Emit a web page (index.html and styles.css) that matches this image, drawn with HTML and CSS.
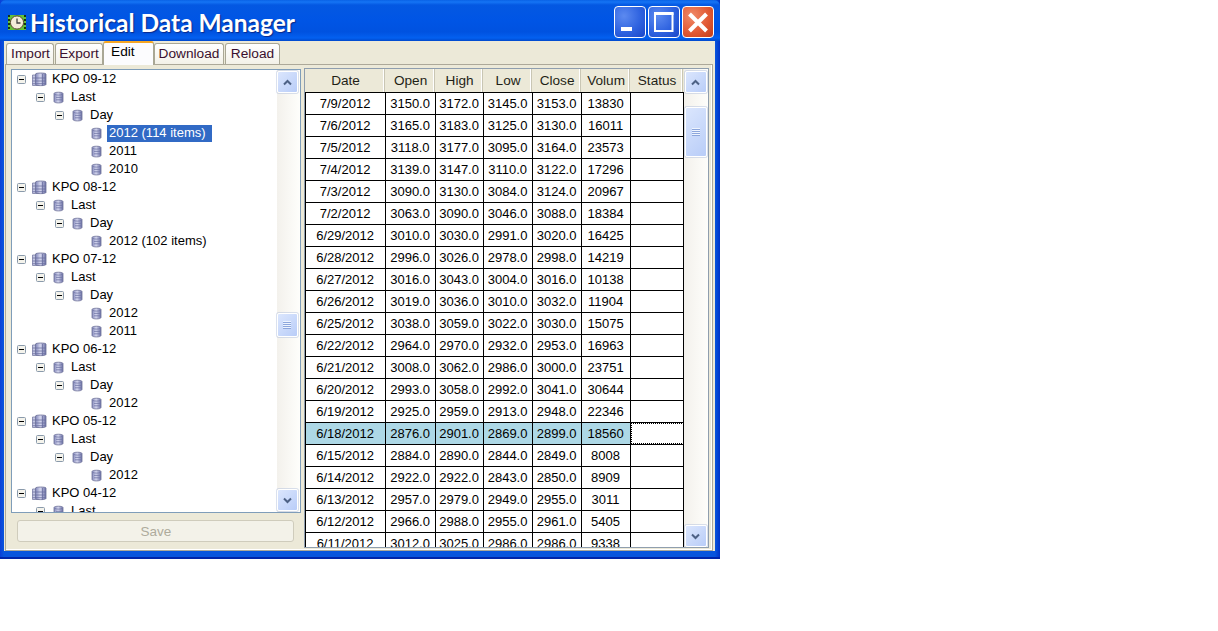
FILE: index.html
```html
<!DOCTYPE html>
<html lang="en">
<head>
<meta charset="utf-8">
<title>Historical Data Manager</title>
<link rel="stylesheet" href="styles.css">
</head>
<body>
<svg class="defs" width="0" height="0" aria-hidden="true">
  <defs>
    <linearGradient id="dbg" x1="0" x2="1" y1="0" y2="0">
      <stop offset="0" stop-color="#7f84b8"/>
      <stop offset=".45" stop-color="#d5d7ee"/>
      <stop offset="1" stop-color="#6a6fa5"/>
    </linearGradient>
    <symbol id="db" viewBox="0 0 11 13">
      <path d="M1 2.5C1 .8 10 .8 10 2.5V10.5C10 12.4 1 12.4 1 10.5Z" fill="url(#dbg)" stroke="#6d7198" stroke-width=".8"/>
      <path d="M1.5 3.3C3 4.4 8 4.4 9.5 3.3M3 6.4H9M3 8.8H9" fill="none" stroke="#7075a5" stroke-width=".8"/>
    </symbol>
    <symbol id="dbs" viewBox="0 0 15 15">
      <path d="M.5 3V13.5H7V3Z" fill="#c3c6e2" stroke="#7a7ea5" stroke-width=".8"/>
      <path d="M3.5 2C3.5 .7 14 .7 14 2V12.5C14 14 3.5 14 3.5 12.5Z" fill="url(#dbg)" stroke="#6d7198" stroke-width=".8"/>
      <path d="M.5 6H14M.5 9H14M.5 11.7H14M10.5 2V14" fill="none" stroke="#6a6ea0" stroke-width=".8"/>
    </symbol>
    <symbol id="up" viewBox="0 0 9 7"><path d="M1 5.5 4.5 2 8 5.5" fill="none" stroke="#4d6185" stroke-width="2"/></symbol>
    <symbol id="down" viewBox="0 0 9 7"><path d="M1 1.5 4.5 5 8 1.5" fill="none" stroke="#4d6185" stroke-width="2"/></symbol>
    <symbol id="grip" viewBox="0 0 8 8"><path d="M0 .5H8M0 2.5H8M0 4.5H8M0 6.5H8" stroke="#eef4fe" stroke-width="1"/><path d="M0 1.5H8M0 3.5H8M0 5.5H8M0 7.5H8" stroke="#8ca6dc" stroke-width="1"/></symbol>
    <symbol id="minus" viewBox="0 0 9 9"><rect x=".5" y=".5" width="8" height="8" rx="1" fill="#f4f3ec" stroke="#8a9aab"/><path d="M2 4.5H7" stroke="#000"/></symbol>
  </defs>
</svg>

<div class="window">
  <header class="titlebar">
    <svg class="app-icon" viewBox="0 0 18 17" width="18" height="17" aria-hidden="true">
      <rect x="0" y="1" width="18" height="15" fill="#62c23a"/>
      <path d="M1 1V16M17 1V16" stroke="#16350f" stroke-width="2" stroke-dasharray="2 2"/>
      <circle cx="9" cy="8.5" r="6.6" fill="#f2ecd8" stroke="#57472c"/>
      <path d="M9 4.5V9H12.5" fill="none" stroke="#444" stroke-width="1.3"/>
    </svg>
    <h1 class="title">Historical Data Manager</h1>
    <div class="controls">
      <button class="ctl ctl-min"><svg width="30" height="30" viewBox="0 0 30 30"><rect x="6" y="20" width="11" height="4" fill="#fff"/></svg></button>
      <button class="ctl ctl-max"><svg width="30" height="30" viewBox="0 0 30 30"><path d="M6 6.5H23.5V24H6Z" fill="none" stroke="#fff" stroke-width="2"/><path d="M5 6.5H24.5" stroke="#fff" stroke-width="3"/></svg></button>
      <button class="ctl ctl-close"><svg width="30" height="30" viewBox="0 0 30 30"><path d="M6.5 7 23.5 24M23.5 7 6.5 24" stroke="#fff" stroke-width="4"/></svg></button>
    </div>
  </header>

  <main class="client">
    <nav class="tabs">
      <span class="tab tab-import">Import</span>
      <span class="tab tab-export">Export</span>
      <span class="tab tab-edit">Edit</span>
      <span class="tab tab-download">Download</span>
      <span class="tab tab-reload">Reload</span>
    </nav>
    <section class="panel">
      <div class="left">
        <div class="tree">
          <ul class="tree-list">
            <li class="node l0"><svg class="exp"><use href="#minus"/></svg><svg class="ic-big"><use href="#dbs"/></svg><span class="lbl">KPO 09-12</span></li>
            <li class="node l1"><svg class="exp"><use href="#minus"/></svg><svg class="ic"><use href="#db"/></svg><span class="lbl">Last</span></li>
            <li class="node l2"><svg class="exp"><use href="#minus"/></svg><svg class="ic"><use href="#db"/></svg><span class="lbl">Day</span></li>
            <li class="node l3"><svg class="ic"><use href="#db"/></svg><span class="lbl sel">2012 (114 items)</span></li>
            <li class="node l3"><svg class="ic"><use href="#db"/></svg><span class="lbl">2011</span></li>
            <li class="node l3"><svg class="ic"><use href="#db"/></svg><span class="lbl">2010</span></li>
            <li class="node l0"><svg class="exp"><use href="#minus"/></svg><svg class="ic-big"><use href="#dbs"/></svg><span class="lbl">KPO 08-12</span></li>
            <li class="node l1"><svg class="exp"><use href="#minus"/></svg><svg class="ic"><use href="#db"/></svg><span class="lbl">Last</span></li>
            <li class="node l2"><svg class="exp"><use href="#minus"/></svg><svg class="ic"><use href="#db"/></svg><span class="lbl">Day</span></li>
            <li class="node l3"><svg class="ic"><use href="#db"/></svg><span class="lbl">2012 (102 items)</span></li>
            <li class="node l0"><svg class="exp"><use href="#minus"/></svg><svg class="ic-big"><use href="#dbs"/></svg><span class="lbl">KPO 07-12</span></li>
            <li class="node l1"><svg class="exp"><use href="#minus"/></svg><svg class="ic"><use href="#db"/></svg><span class="lbl">Last</span></li>
            <li class="node l2"><svg class="exp"><use href="#minus"/></svg><svg class="ic"><use href="#db"/></svg><span class="lbl">Day</span></li>
            <li class="node l3"><svg class="ic"><use href="#db"/></svg><span class="lbl">2012</span></li>
            <li class="node l3"><svg class="ic"><use href="#db"/></svg><span class="lbl">2011</span></li>
            <li class="node l0"><svg class="exp"><use href="#minus"/></svg><svg class="ic-big"><use href="#dbs"/></svg><span class="lbl">KPO 06-12</span></li>
            <li class="node l1"><svg class="exp"><use href="#minus"/></svg><svg class="ic"><use href="#db"/></svg><span class="lbl">Last</span></li>
            <li class="node l2"><svg class="exp"><use href="#minus"/></svg><svg class="ic"><use href="#db"/></svg><span class="lbl">Day</span></li>
            <li class="node l3"><svg class="ic"><use href="#db"/></svg><span class="lbl">2012</span></li>
            <li class="node l0"><svg class="exp"><use href="#minus"/></svg><svg class="ic-big"><use href="#dbs"/></svg><span class="lbl">KPO 05-12</span></li>
            <li class="node l1"><svg class="exp"><use href="#minus"/></svg><svg class="ic"><use href="#db"/></svg><span class="lbl">Last</span></li>
            <li class="node l2"><svg class="exp"><use href="#minus"/></svg><svg class="ic"><use href="#db"/></svg><span class="lbl">Day</span></li>
            <li class="node l3"><svg class="ic"><use href="#db"/></svg><span class="lbl">2012</span></li>
            <li class="node l0"><svg class="exp"><use href="#minus"/></svg><svg class="ic-big"><use href="#dbs"/></svg><span class="lbl">KPO 04-12</span></li>
            <li class="node l1"><svg class="exp"><use href="#minus"/></svg><svg class="ic"><use href="#db"/></svg><span class="lbl">Last</span></li>
          </ul>
          <div class="sb">
            <div class="sb-btn"><svg class="chev"><use href="#up"/></svg></div>
            <div class="sb-btn thumb thumb-tree"><svg class="grip"><use href="#grip"/></svg></div>
            <div class="sb-btn sb-end"><svg class="chev"><use href="#down"/></svg></div>
          </div>
        </div>
        <button class="save" disabled>Save</button>
      </div>

      <div class="grid">
        <div class="table">
          <div class="row head"><span>Date</span><span>Open</span><span>High</span><span>Low</span><span>Close</span><span>Volum</span><span>Status</span></div>
          <div class="row"><span>7/9/2012</span><span>3150.0</span><span>3172.0</span><span>3145.0</span><span>3153.0</span><span>13830</span><span></span></div>
          <div class="row"><span>7/6/2012</span><span>3165.0</span><span>3183.0</span><span>3125.0</span><span>3130.0</span><span>16011</span><span></span></div>
          <div class="row"><span>7/5/2012</span><span>3118.0</span><span>3177.0</span><span>3095.0</span><span>3164.0</span><span>23573</span><span></span></div>
          <div class="row"><span>7/4/2012</span><span>3139.0</span><span>3147.0</span><span>3110.0</span><span>3122.0</span><span>17296</span><span></span></div>
          <div class="row"><span>7/3/2012</span><span>3090.0</span><span>3130.0</span><span>3084.0</span><span>3124.0</span><span>20967</span><span></span></div>
          <div class="row"><span>7/2/2012</span><span>3063.0</span><span>3090.0</span><span>3046.0</span><span>3088.0</span><span>18384</span><span></span></div>
          <div class="row"><span>6/29/2012</span><span>3010.0</span><span>3030.0</span><span>2991.0</span><span>3020.0</span><span>16425</span><span></span></div>
          <div class="row"><span>6/28/2012</span><span>2996.0</span><span>3026.0</span><span>2978.0</span><span>2998.0</span><span>14219</span><span></span></div>
          <div class="row"><span>6/27/2012</span><span>3016.0</span><span>3043.0</span><span>3004.0</span><span>3016.0</span><span>10138</span><span></span></div>
          <div class="row"><span>6/26/2012</span><span>3019.0</span><span>3036.0</span><span>3010.0</span><span>3032.0</span><span>11904</span><span></span></div>
          <div class="row"><span>6/25/2012</span><span>3038.0</span><span>3059.0</span><span>3022.0</span><span>3030.0</span><span>15075</span><span></span></div>
          <div class="row"><span>6/22/2012</span><span>2964.0</span><span>2970.0</span><span>2932.0</span><span>2953.0</span><span>16963</span><span></span></div>
          <div class="row"><span>6/21/2012</span><span>3008.0</span><span>3062.0</span><span>2986.0</span><span>3000.0</span><span>23751</span><span></span></div>
          <div class="row"><span>6/20/2012</span><span>2993.0</span><span>3058.0</span><span>2992.0</span><span>3041.0</span><span>30644</span><span></span></div>
          <div class="row"><span>6/19/2012</span><span>2925.0</span><span>2959.0</span><span>2913.0</span><span>2948.0</span><span>22346</span><span></span></div>
          <div class="row current"><span>6/18/2012</span><span>2876.0</span><span>2901.0</span><span>2869.0</span><span>2899.0</span><span>18560</span><span class="focus"></span></div>
          <div class="row"><span>6/15/2012</span><span>2884.0</span><span>2890.0</span><span>2844.0</span><span>2849.0</span><span>8008</span><span></span></div>
          <div class="row"><span>6/14/2012</span><span>2922.0</span><span>2922.0</span><span>2843.0</span><span>2850.0</span><span>8909</span><span></span></div>
          <div class="row"><span>6/13/2012</span><span>2957.0</span><span>2979.0</span><span>2949.0</span><span>2955.0</span><span>3011</span><span></span></div>
          <div class="row"><span>6/12/2012</span><span>2966.0</span><span>2988.0</span><span>2955.0</span><span>2961.0</span><span>5405</span><span></span></div>
          <div class="row"><span>6/11/2012</span><span>3012.0</span><span>3025.0</span><span>2986.0</span><span>2986.0</span><span>9338</span><span></span></div>
        </div>
        <div class="sb">
          <div class="sb-btn"><svg class="chev"><use href="#up"/></svg></div>
          <div class="sb-btn thumb thumb-grid"><svg class="grip"><use href="#grip"/></svg></div>
          <div class="sb-btn sb-end"><svg class="chev"><use href="#down"/></svg></div>
        </div>
      </div>
    </section>
  </main>
</div>
</body>
</html>
```

FILE: styles.css
```css
* { box-sizing: border-box; }
html, body { margin: 0; padding: 0; background: #fff; }
body { font: 13px/1 "Liberation Sans", Arial, sans-serif; color: #000; overflow: hidden; }
.defs { position: absolute; }

.window {
  width: 720px;
  height: 559px;
  display: flex;
  flex-direction: column;
  padding: 0 5px 6px 4px;
  background: linear-gradient(90deg, #0a3fd8 0, #0855dd 4px, #0855dd 715px, #0033c8 720px);
  border-bottom: 2px solid #0024a8;
}

.titlebar {
  height: 41px;
  margin: 0 -5px 0 -4px;
  padding: 6px 6px 0 8px;
  display: flex;
  align-items: flex-start;
  background: linear-gradient(180deg, #0a62e6 0, #1574f5 2px, #0458e2 5px, #0055e5 20px, #0052e0 32px, #0360f0 38px, #0048cc 41px);
  border-radius: 6px 6px 0 0;
}
.app-icon { margin-top: 8px; flex: none; }
.title {
  margin: 2px 0 0 4px;
  font: bold 24.5px/30px Lato, "Open Sans", sans-serif;
  color: #fff;
  text-shadow: 1px 1px 1px #0a2a8a;
  white-space: nowrap;
}
.controls { margin-left: auto; display: flex; gap: 2px; }
.ctl {
  width: 32px;
  height: 32px;
  padding: 0;
  border: 1px solid #fff;
  border-radius: 4px;
  background: radial-gradient(circle at 30% 30%, #5c8af0 0, #2f63e0 55%, #1a45c8 100%);
  display: flex;
  align-items: center;
  justify-content: center;
}
.ctl-close { background: radial-gradient(circle at 30% 30%, #f08a68 0, #e25a35 55%, #c43d18 100%); }

.client {
  flex: 1;
  min-height: 0;
  background: #ece9d8;
  padding: 2px 0 0 1px;
  display: flex;
  flex-direction: column;
}

.tabs { height: 21px; display: flex; padding-left: 1px; gap: 1px; }
.tab {
  height: 21px;
  padding-top: 3px;
  text-align: center;
  font-size: 13.7px;
  color: #3a0f2e;
  border: 1px solid #a9a795;
  border-bottom: 0;
  border-radius: 3px 3px 0 0;
  background: linear-gradient(180deg, #fff, #f3f1e8);
}
.tab-import { width: 48px; padding-left: 1px; }
.tab-export { width: 48px; }
.tab-edit {
  width: 51px;
  height: 24px;
  margin: -2px -1px 0;
  padding: 2px 0 0 7px;
  text-align: left;
  color: #000;
  background: #fcfcfe;
  border-top: 2px solid #f5a623;
  position: relative;
  z-index: 1;
}
.tab-download { width: 70px; }
.tab-reload { width: 55px; }

.panel {
  width: 708px;
  height: 488px;
  display: flex;
  gap: 3px;
  padding: 4px 3px 0 5px;
  border: 1px solid #aca899;
  box-shadow: inset -1px -1px 0 #fff;
  background: #ece9d8;
}

.left { width: 290px; display: flex; flex-direction: column; }
.tree {
  height: 444px;
  display: flex;
  border: 1px solid #7f9db9;
  background: #fff;
  overflow: hidden;
}
.tree-list { flex: 1; margin: 0; padding: 0; list-style: none; overflow: hidden; }
.node {
  height: 18px;
  display: flex;
  align-items: center;
  white-space: nowrap;
}
.l0 { padding-left: 5px; }
.l1 { padding-left: 24px; }
.l2 { padding-left: 43px; }
.l3 { padding-left: 79px; }
.exp { width: 9px; height: 9px; flex: none; margin-right: 6px; }
.l1 .exp, .l2 .exp { margin-right: 8px; }
.ic-big { width: 15px; height: 15px; flex: none; margin-right: 3px; }
.ic { width: 11px; height: 13px; flex: none; margin-right: 5px; }
.lbl { padding: 0 2px; height: 17px; line-height: 15px; }
.sel { background: #316ac5; color: #fff; width: 105px; }

.save {
  width: 277px;
  height: 22px;
  margin: 7px 0 0 6px;
  padding: 0 0 0 1px;
  font: 13.5px "Liberation Sans", Arial, sans-serif;
  color: #aeab9c;
  background: #f3f2e9;
  border: 1px solid #cfccbc;
  border-radius: 3px;
}

.grid {
  width: 406px;
  height: 480px;
  margin-top: -1px;
  display: flex;
  border: 1px solid #8f9eae;
  background: #fff;
  overflow: hidden;
}
.table { width: 379px; overflow: hidden; flex: none; }
.row {
  display: grid;
  grid-template-columns: 80px 50px 48px 49px 49px 49px 53px;
  height: 22px;
  border-left: 1px solid #000;
  border-bottom: 1px solid #000;
}
.row > span {
  border-right: 1px solid #000;
  text-align: center;
  line-height: 21px;
  white-space: nowrap;
  overflow: hidden;
}
.row.head {
  height: 24px;
  background: #ece9d8;
  border-left: 0;
  border-bottom: 1px solid #000;
  font-size: 13.6px;
}
.row.head > span {
  border-right: 0;
  padding-left: 2px;
  line-height: 24px;
  color: #1f1f16;
  box-shadow: inset -1px 0 0 #c9c6b4, inset -2px 0 0 #fff;
}
.row.current { background: #add8e6; }
.row.current .focus { background: #fff; outline: 1px dotted #000; outline-offset: -1px; }

.sb {
  flex: none;
  width: 23px;
  padding: 1px 2px 1px 0;
  display: flex;
  flex-direction: column;
  background: linear-gradient(90deg, #f3f1ec, #fefefb);
}
.grid > .sb { width: 25px; padding: 2px 2px 0 1px; }
.sb-btn {
  flex: none;
  height: 22px;
  display: flex;
  align-items: center;
  justify-content: center;
  border: 1px solid #fff;
  border-radius: 2px;
  background: linear-gradient(135deg, #dbe6fd, #b9cdf8);
  box-shadow: 0 0 0 1px rgba(150,170,210,.35);
}
.sb-end { margin-top: auto; }
.thumb-tree { margin-top: 220px; height: 24px; }
.thumb-grid { margin-top: 14px; height: 50px; }
.chev { width: 9px; height: 7px; }
.grip { width: 8px; height: 8px; }
```
